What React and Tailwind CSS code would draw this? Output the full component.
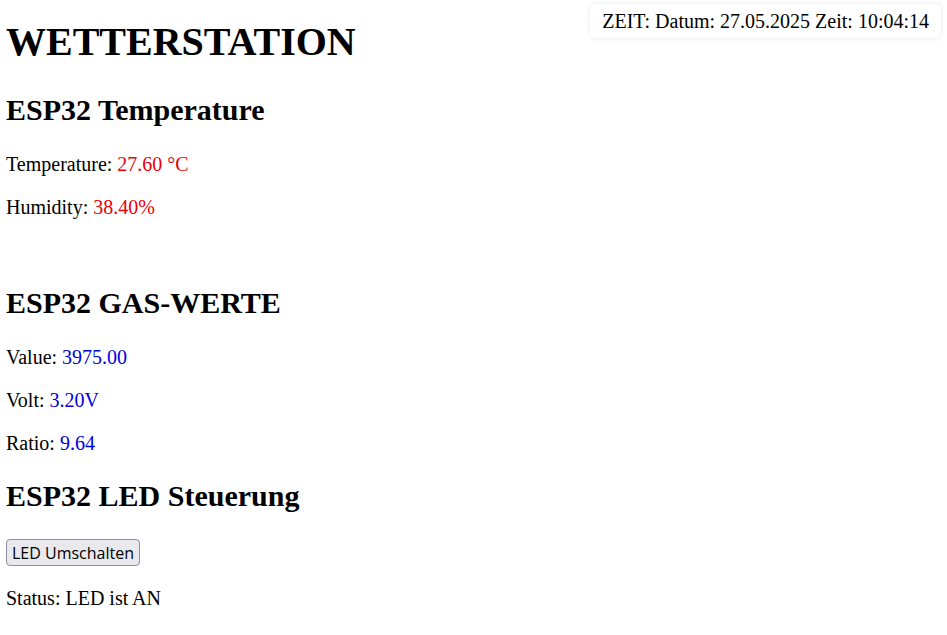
function Section({ title, children, className = "" }) {
  return (
    <section className={className}>
      <h2 className="text-[30px] leading-[34px] font-bold mb-[26px]">{title}</h2>
      <div className="flex flex-col items-start gap-[21px]">{children}</div>
    </section>
  );
}

function Reading({ label, value, color }) {
  return (
    <p>
      {label}: <span className={color}>{value}</span>
    </p>
  );
}

export default function App() {
  return (
    <div className="relative min-h-screen bg-white px-[6px] pt-[20px] pb-6 text-black text-[20px] leading-[22px] font-['Liberation_Serif','Times_New_Roman',serif]">
      <div className="absolute top-[4px] right-[6px] rounded-[5px] bg-white px-3 py-[6px] shadow-[0_0_5px_rgba(0,0,0,0.1)]">
        ZEIT: Datum: 27.05.2025 Zeit: 10:04:14
      </div>
      <h1 className="text-[40px] leading-[44px] font-bold mb-[29px]">WETTERSTATION</h1>
      <Section title="ESP32 Temperature">
        <Reading label="Temperature" value="27.60 °C" color="text-[#e8000a]" />
        <Reading label="Humidity" value="38.40%" color="text-[#e8000a]" />
      </Section>
      <Section title="ESP32 GAS-WERTE" className="mt-[68px]">
        <Reading label="Value" value="3975.00" color="text-[#0000e0]" />
        <Reading label="Volt" value="3.20V" color="text-[#0000e0]" />
        <Reading label="Ratio" value="9.64" color="text-[#0000e0]" />
      </Section>
      <Section title="ESP32 LED Steuerung" className="mt-[25px]">
        <button
          type="button"
          className="h-[27px] rounded-[4px] border border-[#8f8f9d] bg-[#e9e9ed] px-[5px] text-[16px] leading-[20px] font-['Open_Sans','Noto_Sans',sans-serif]"
        >
          LED Umschalten
        </button>
        <p>Status: LED ist AN</p>
      </Section>
    </div>
  );
}
